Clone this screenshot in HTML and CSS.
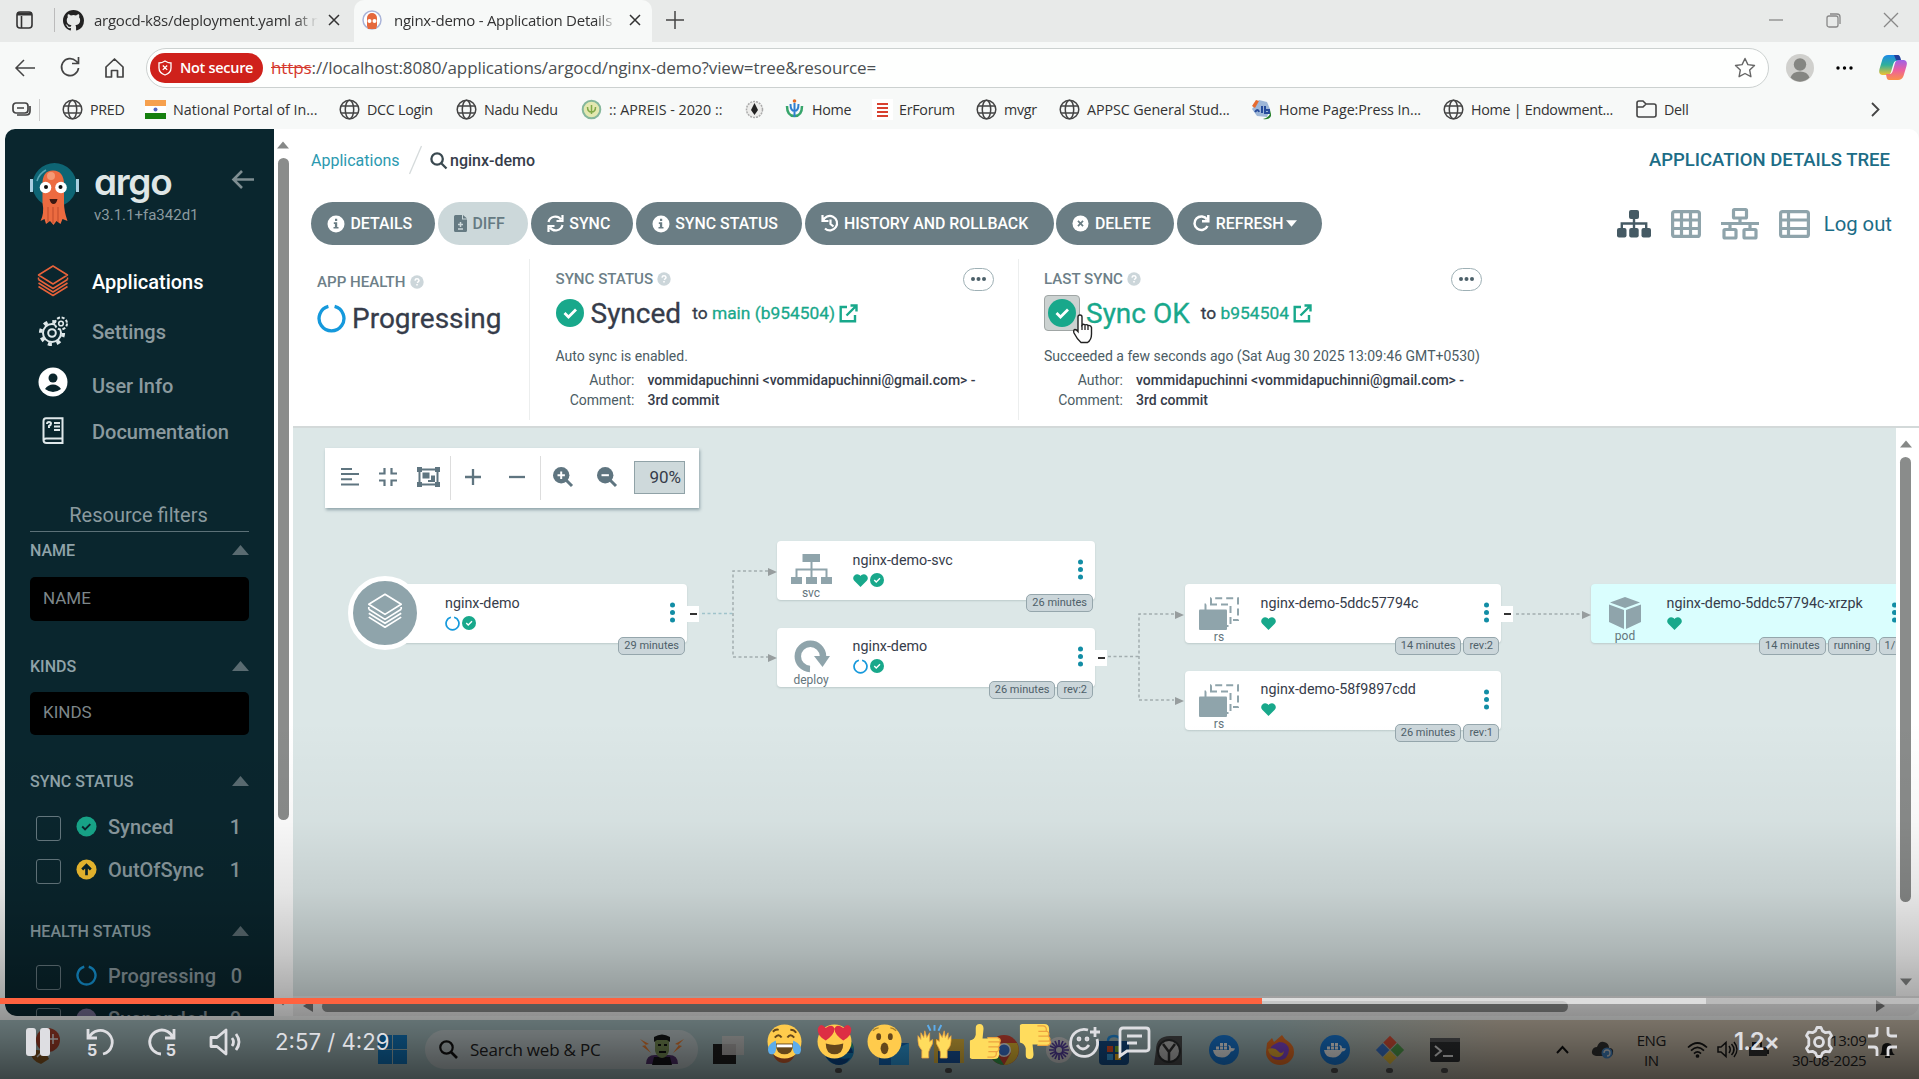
FILE: index.html
```html
<!DOCTYPE html>
<html lang="en">
<head>
<meta charset="utf-8">
<title>nginx-demo - Application Details Tree</title>
<link rel="stylesheet" href="styles.css">
</head>
<body>
<svg class="defs" width="0" height="0">
  <symbol id="globe" viewBox="0 0 21 21"><g fill="none" stroke="#444" stroke-width="1.5"><circle cx="10.5" cy="10.5" r="9.3"/><ellipse cx="10.5" cy="10.5" rx="4.2" ry="9.3"/><path d="M2 7h17M2 14h17"/></g></symbol>
  <symbol id="check" viewBox="0 0 28 28"><circle cx="14" cy="14" r="14" fill="#18a88b"/><path d="M8.5 14l4 4 7.5-7.5" fill="none" stroke="#fff" stroke-width="2.8"/></symbol>
  <symbol id="ring" viewBox="0 0 28 28"><path d="M17 2.3A12 12 0 1 1 11 2.3" fill="none" stroke="#1599dc" stroke-width="3.2"/></symbol>
  <symbol id="heart" viewBox="0 0 16 14"><path d="M8 14L1.3 7.3A4.2 4.2 0 0 1 7 1.2L8 2.2 9 1.2a4.2 4.2 0 0 1 5.7 6.1z" fill="#18a88b"/></symbol>
  <symbol id="info" viewBox="0 0 18 18"><circle cx="9" cy="9" r="8.5" fill="#fff"/><path d="M8 3.800h2.200v2.200H8zM6.800 7.300h3.400v4.700h1.300v1.600H6.500V12h1.400V8.900H6.800z" fill="#6a7d84"/></symbol>
  <symbol id="quest" viewBox="0 0 14 14"><circle cx="7" cy="7" r="6.7" fill="#ccd6da"/><path d="M5 5.6q.2-1.8 2-1.8t2 1.6q0 1-2 2.2M7 9v1.6" fill="none" stroke="#fff" stroke-width="1.5"/></symbol>
  <symbol id="ext" viewBox="0 0 19 19"><path d="M8 3H1.7v14.300h14.300V11M11.500 1.500H17.500V7.500M17 2L7.500 11.500" fill="none" stroke="#18a88b" stroke-width="2.400"/></symbol>
  <symbol id="layers" viewBox="0 0 34 34"><path d="M17 2L31.500 11 17 20 2.500 11zM2.500 15.500L17 24.500 31.500 15.500M2.500 15.500v-2M31.500 15.500v-2M2.500 19L17 28 31.500 19M2.500 22.500L17 31.500 31.500 22.500" fill="none" stroke="currentColor" stroke-width="1.500" stroke-linejoin="round"/></symbol>
  <symbol id="sitemap" viewBox="0 0 34 28"><g fill="currentColor"><rect x="12" y="0" width="10" height="9" rx="2"/><rect x="0" y="18" width="9.500" height="9.500" rx="2"/><rect x="12.200" y="18" width="9.500" height="9.500" rx="2"/><rect x="24.500" y="18" width="9.500" height="9.500" rx="2"/></g><path d="M17 8v11M4.800 19v-5.500h24.400V19" fill="none" stroke="currentColor" stroke-width="2.400"/></symbol>
  <symbol id="rs" viewBox="0 0 40 33"><path d="M12 8V1.200h27V23h-5" fill="none" stroke="#8fa4ab" stroke-width="2" stroke-dasharray="7 4"/><path d="M6.500 14V7.500h25V29H27" fill="none" stroke="#8fa4ab" stroke-width="2" stroke-dasharray="7 4"/><rect y="12.500" width="28" height="20.500" rx="1" fill="#8fa4ab"/></symbol>
  <symbol id="docker" viewBox="0 0 30 30"><circle cx="15" cy="15" r="15" fill="#1a7fe0"/><path d="M4 15h16q1-3-1-5 3 0 3 3l4 .5q-1 3-4 3-3 6-9 6-8 0-9-7.500zM7 11.500h3v3H7zM11 11.500h3v3h-3zM15 11.500h3v3h-3zM11 8h3v3h-3zM15 8h3v3h-3z" fill="#fff"/></symbol>
  <symbol id="tri" viewBox="0 0 17 10"><path d="M8.500 0L17 10H0z" fill="currentColor"/></symbol>
</svg>

<div class="screen">
  <!-- browser tabs -->
  <header class="tabs">
    <svg class="tabs-menu" width="17" height="18" viewBox="0 0 17 18" fill="none" stroke="#333" stroke-width="1.600"><rect x="1" y="1" width="15" height="16" rx="3"/><path d="M1 3h15" stroke-width="3"/><path d="M5.500 5v12"/></svg>
    <i class="tabs-sep"></i>
    <div class="tab tab-first">
      <svg width="21" height="21" viewBox="0 0 16 16"><path fill="#222" d="M8 0C3.580 0 0 3.580 0 8c0 3.540 2.290 6.530 5.470 7.590.4.070.55-.17.55-.38v-1.490C3.730 14.210 3.260 12.780 3.260 12.780c-.36-.92-.89-1.170-.89-1.170-.73-.5.060-.49.060-.49.800.06 1.230.83 1.230.83.720 1.230 1.870.87 2.330.66.070-.52.280-.87.510-1.070-1.780-.2-3.640-.89-3.640-3.950 0-.87.310-1.590.82-2.150-.08-.2-.36-1.020.08-2.120 0 0 .67-.22 2.200.82a7.600 7.600 0 0 1 4 0c1.530-1.040 2.200-.82 2.200-.82.440 1.100.160 1.920.080 2.120.510.560.820 1.280.820 2.150 0 3.070-1.870 3.750-3.650 3.950.290.250.540.730.540 1.480v2.200c0 .21.150.46.550.38A8 8 0 0 0 16 8c0-4.420-3.580-8-8-8z"/></svg>
      <span class="tab-title fade">argocd-k8s/deployment.yaml at n</span>
      <svg class="x" width="12" height="12" viewBox="0 0 12 12"><path d="M1 1l10 10M11 1L1 11" stroke="#333" stroke-width="1.500"/></svg>
    </div>
    <div class="tab tab-active">
      <svg width="20" height="20" viewBox="0 0 20 20"><circle cx="10" cy="10" r="9" fill="#fff" stroke="#aab4d8" stroke-width="1.500"/><path d="M5 16V8a5 5 0 0 1 10 0v8l-1 3H6z" fill="#e5683c"/><circle cx="7.500" cy="11" r="2" fill="#fff"/><circle cx="12.500" cy="11" r="2" fill="#fff"/></svg>
      <span class="tab-title fade">nginx-demo - Application Details</span>
      <svg class="x" width="12" height="12" viewBox="0 0 12 12"><path d="M1 1l10 10M11 1L1 11" stroke="#333" stroke-width="1.500"/></svg>
    </div>
    <svg class="tab-new" width="18" height="18" viewBox="0 0 18 18"><path d="M9 0v18M0 9h18" stroke="#444" stroke-width="1.500"/></svg>
    <div class="win">
      <svg width="14" height="14" viewBox="0 0 14 14"><path d="M0 7h14" stroke="#888" stroke-width="1.300"/></svg>
      <svg width="15" height="15" viewBox="0 0 15 15" fill="none" stroke="#888" stroke-width="1.300"><rect x="1" y="3" width="11" height="11" rx="2"/><path d="M4 1h7q3 0 3 3v7"/></svg>
      <svg width="14" height="14" viewBox="0 0 14 14"><path d="M0 0l14 14M14 0L0 14" stroke="#888" stroke-width="1.300"/></svg>
    </div>
  </header>

  <!-- address bar -->
  <div class="address">
    <svg width="20" height="18" viewBox="0 0 20 18" fill="none" stroke="#444" stroke-width="1.500"><path d="M20 9H1M9 1L1 9l8 8"/></svg>
    <svg width="20" height="21" viewBox="0 0 20 21" fill="none" stroke="#444" stroke-width="1.700"><path d="M18.500 11a8.500 8.500 0 1 1-2.500-7l2 2M18.500 0v6.500H12"/></svg>
    <svg width="19" height="20" viewBox="0 0 19 20" fill="none" stroke="#444" stroke-width="1.700" stroke-linejoin="round"><path d="M1 9l8.500-8L18 9v10h-5.500v-6.500h-6V19H1z"/></svg>
    <div class="urlbar">
      <span class="badge"><svg width="14" height="16" viewBox="0 0 14 16" fill="none" stroke="#fff" stroke-width="1.300"><path d="M7 1q3 2 6 2v5q0 5-6 7-6-2-6-7V3q3 0 6-2zM4.800 5.500l4.400 4.400M9.200 5.500L4.800 9.900"/></svg>Not secure</span>
      <span class="url"><s>https</s>://localhost:8080/applications/argocd/nginx-demo?view=tree&amp;resource=</span>
      <svg class="star" width="22" height="21" viewBox="0 0 22 21"><path d="M11 1.500l2.900 6.100 6.600.9-4.800 4.600 1.200 6.600L11 16.500l-5.900 3.200 1.200-6.600L1.500 8.500l6.600-.9z" fill="none" stroke="#666" stroke-width="1.400" stroke-linejoin="round"/></svg>
    </div>
    <svg width="28" height="28" viewBox="0 0 28 28"><circle cx="14" cy="14" r="14" fill="#d0d0cd"/><circle cx="14" cy="10.500" r="6.200" fill="#858682"/><path d="M4.500 23.500q2-6 9.500-6t9.500 6a13 13 0 0 1-19 0z" fill="#858682"/></svg>
    <svg class="more" width="17" height="4" viewBox="0 0 17 4"><circle cx="2" cy="2" r="1.700"/><circle cx="8.500" cy="2" r="1.700"/><circle cx="15" cy="2" r="1.700"/></svg>
    <svg class="copilot" width="28" height="27" viewBox="0 0 28 27"><defs><linearGradient id="cp1" x2="0" y2="1"><stop stop-color="#1d8ae8"/><stop offset=".5" stop-color="#30b09a"/><stop offset="1" stop-color="#f2c230"/></linearGradient><linearGradient id="cp2" x2="0" y2="1"><stop stop-color="#9d62e8"/><stop offset=".5" stop-color="#ec5fa0"/><stop offset="1" stop-color="#fb9148"/></linearGradient></defs><path d="M9 1h9q2 0 2.500 3l.5 3h-4q-2 0-3 4l-2 7q-1 3-4 3H3q-4-1-2.500-6l3-10Q5 1 9 1z" fill="url(#cp1)"/><path d="M15 1h4q2 0 3 5h-5z" fill="#223f9b"/><path d="M19 26h-9q-2 0-2.500-3L7 20h4q2 0 3-4l2-7q1-3 4-3h5q4 1 2.500 6l-3 10Q23 26 19 26z" fill="url(#cp2)"/></svg>
  </div>

  <!-- bookmarks -->
  <nav class="marks">
    <svg class="marks-menu" width="20" height="15" viewBox="0 0 20 15" fill="none" stroke="#444" stroke-width="1.700"><rect x="1" y="1" width="15" height="10" rx="3"/><path d="M5 6h7M18 4v5q0 4-4 4H5"/></svg>
    <i class="marks-sep"></i>
    <span class="mark" style="width:83px"><svg><use href="#globe"/></svg>PRED</span>
    <span class="mark wide" style="width:194px"><svg viewBox="0 0 21 21"><path fill="#f6a04d" d="M0 1h21v6H0z"/><path fill="#fff" d="M0 7h21v7H0z"/><path fill="#16800f" d="M0 14h21v6H0z"/><circle cx="10.500" cy="10.500" r="2" fill="#5566c0"/></svg>National Portal of In...</span>
    <span class="mark" style="width:117px"><svg><use href="#globe"/></svg>DCC Login</span>
    <span class="mark" style="width:125px"><svg><use href="#globe"/></svg>Nadu Nedu</span>
    <span class="mark wide" style="width:163px"><svg viewBox="0 0 21 21"><circle cx="10.500" cy="10.500" r="8.800" fill="#e3e8b0" stroke="#85b79b" stroke-width="2"/><path d="M10.500 6v9M6.500 8q0 5 4 5t4-5" fill="none" stroke="#81a948" stroke-width="1.500"/></svg>:: APREIS - 2020 ::</span>
    <span class="mark" style="width:40px"><svg viewBox="0 0 21 21"><circle cx="10.500" cy="10.500" r="8" fill="#ececea" stroke="#aaa" stroke-width="1.500" stroke-dasharray="2 1"/><path d="M10.500 4l3.500 7-3.500 5L7 11z" fill="#222"/></svg></span>
    <span class="mark" style="width:88px"><svg viewBox="0 0 21 21"><path d="M3 7q0 10 7.500 10T18 7" fill="none" stroke="#37a56b" stroke-width="2.500"/><path d="M6.500 5q0 7 4 7t4-7M10.500 4v14" fill="none" stroke="#2f7fd0" stroke-width="2"/><circle cx="10.500" cy="2" r="1.800" fill="#e46a28"/></svg>Home</span>
    <span class="mark" style="width:104px"><svg viewBox="0 0 21 21"><path d="M0 0h21v21H0z" fill="#fff"/><path d="M5 5h11M5 9h11M5 13h11M5 17h11" stroke="#d8402f" stroke-width="2"/></svg><b>ErForum</b></span>
    <span class="mark" style="width:83px"><svg><use href="#globe"/></svg>mvgr</span>
    <span class="mark mid" style="width:192px"><svg><use href="#globe"/></svg>APPSC General Stud...</span>
    <span class="mark mid" style="width:192px"><svg viewBox="0 0 21 21"><path d="M1 10L8 1l8 2 3 7-3 8-10-1z" fill="#9eb7d8"/><path d="M1 7l4-6 3 1-4 7z" fill="#e66a2e"/><path d="M12 20q7-1 8-9v6q-2 4-8 3z" fill="#27812b"/><path d="M4 13q3-4 4 0M11 7v7M14 7v7h4v-3h-4" fill="none" stroke="#274c9b" stroke-width="2"/></svg>Home Page:Press In...</span>
    <span class="mark" style="width:193px"><svg><use href="#globe"/></svg>Home | Endowment...</span>
    <span class="mark"><svg viewBox="0 0 21 21" fill="none" stroke="#444" stroke-width="1.600"><path d="M1 4q0-2 2-2h4l3 3h8q2 0 2 2v9q0 2-2 2H3q-2 0-2-2zM1 8h6l3-3"/></svg>Dell</span>
    <svg class="marks-next" width="9" height="15" viewBox="0 0 9 15"><path d="M1 1l6.500 6.500L1 14" fill="none" stroke="#444" stroke-width="1.800"/></svg>
  </nav>

  <div class="page">
    <aside class="side">
      <div class="brand">
        <svg width="49" height="64" viewBox="0 0 49 64"><circle cx="24.500" cy="24" r="22" fill="#0e6574"/><path d="M7 20a18 18 0 0 1 9-11" stroke="#5aa7b5" stroke-width="1.500" fill="none"/><path d="M1.500 18v13M47.500 18v13" stroke="#a9cfe0" stroke-width="3"/><path d="M12.500 24Q12 9.500 23 9.500T34 24v18q0 8 3.500 18l-5-2-2 5-4-3-3 4-3.500-4-4 3-1.500-5-4 2q4-8 2-18z" fill="#ec6b40"/><path d="M18 46v15M23 46v16M28 46v15" stroke="#bf4a2a"/><circle cx="21" cy="15" r="4" fill="#f49a75"/><circle cx="15.500" cy="26.500" r="5.800" fill="#fff"/><circle cx="31" cy="26.500" r="5.800" fill="#fff"/><circle cx="16" cy="26" r="2" fill="#111"/><circle cx="30.500" cy="26" r="2" fill="#111"/><path d="M19.500 38h8q-1 5-4 5t-4-5z" fill="#3b1912"/></svg>
        <div class="brand-text"><span class="brand-name">argo</span><span class="brand-ver">v3.1.1+fa342d1</span></div>
        <svg class="brand-back" width="22" height="19" viewBox="0 0 22 19"><path d="M22 9.500H2M10 1L1.500 9.500 10 18" fill="none" stroke="#7f8e92" stroke-width="2.600"/></svg>
      </div>
      <div class="menu">
        <div class="item on"><svg width="34" height="34"><use href="#layers"/></svg>Applications</div>
        <div class="item i2"><svg width="30" height="30" viewBox="0 0 30 30" fill="none" stroke="#dfe8ea"><circle cx="14" cy="17" r="9" stroke-width="2"/><circle cx="14" cy="17" r="11.300" stroke-width="3.600" stroke-dasharray="4 4.870"/><circle cx="14" cy="17" r="3.800" stroke-width="2"/><circle cx="23" cy="7.500" r="6" fill="#0a252c" stroke-width="2" stroke-dasharray="3 1.700"/><circle cx="23" cy="7.500" r="2.300" stroke-width="1.600"/></svg>Settings</div>
        <div class="item i3"><svg width="30" height="30" viewBox="0 0 30 30"><circle cx="15" cy="15" r="14.500" fill="#fff"/><circle cx="15" cy="11" r="4.500" fill="#0a252c"/><path d="M7 22q3-4.500 8-4.500t8 4.500q-4 3-8 3t-8-3z" fill="#0a252c"/></svg>User Info</div>
        <div class="item i4"><svg width="22" height="28" viewBox="0 0 22 28" fill="none" stroke="#dfe8ea" stroke-width="2"><path d="M20.500 21V1.200H4Q1.500 1.200 1.500 4v19q0 3 3 3h16v-4.500H4q-2.500 0-2.500 2.500"/><path d="M12 6h6M12 9.500h6M12 13h6M5 7q0-2 2-2t2 1.500Q9 8 7 9v2"/></svg>Documentation</div>
      </div>
      <div class="filters-title">Resource filters</div>
      <div class="fh f1">NAME<svg><use href="#tri"/></svg></div>
      <div class="field">NAME</div>
      <div class="fh f2">KINDS<svg><use href="#tri"/></svg></div>
      <div class="field fk">KINDS</div>
      <div class="fh f3">SYNC STATUS<svg><use href="#tri"/></svg></div>
      <div class="opt o1"><i></i><svg viewBox="0 0 22 22"><circle cx="11" cy="11" r="10.500" fill="#18a88b"/><path d="M6.500 11l3 3 5.500-5.500" fill="none" stroke="#0a252c" stroke-width="2"/></svg>Synced<em>1</em></div>
      <div class="opt"><i></i><svg viewBox="0 0 22 22"><circle cx="11" cy="11" r="10.500" fill="#f4c030"/><path d="M11 17V7M6.500 11L11 6.500 15.500 11" fill="none" stroke="#0a252c" stroke-width="2.800"/></svg>OutOfSync<em>1</em></div>
      <div class="fh f4">HEALTH STATUS<svg><use href="#tri"/></svg></div>
      <div class="opt o2"><i></i><svg><use href="#ring"/></svg>Progressing<em>0</em></div>
      <div class="opt"><i></i><svg viewBox="0 0 22 22"><circle cx="11" cy="11" r="10.500" fill="#766f94"/></svg>Suspended<em>0</em></div>
    </aside>
    <div class="vscroll side-scroll"><svg><use href="#tri"/></svg><i></i><svg class="down"><use href="#tri"/></svg></div>

    <main class="main">
      <div class="crumbs">
        <a>Applications</a>
        <svg width="13" height="28" viewBox="0 0 13 28"><path d="M12.500 0L.5 28" stroke="#d5dadb" stroke-width="1.300"/></svg>
        <svg class="mag" width="17" height="17" viewBox="0 0 17 17"><path d="M11.500 11.500l5 5M12.800 7a5.700 5.700 0 1 1-11.400 0 5.700 5.700 0 0 1 11.400 0z" fill="none" stroke="#3a4950" stroke-width="2.300"/></svg>
        <span>nginx-demo</span>
        <b>APPLICATION DETAILS TREE</b>
      </div>
      <div class="actions">
        <button style="width:124px"><svg width="18" height="18"><use href="#info"/></svg>DETAILS</button>
        <button class="off" style="width:90px"><svg width="13" height="17" viewBox="0 0 13 17"><path d="M0 1.500Q0 0 1.500 0H8v4.500h5v11q0 1.500-1.500 1.500h-10Q0 17 0 15.500zM9 0l4 3.500H9z" fill="#657a82"/><path d="M6.500 7v5M4 9.500h5M4 14h5" stroke="#ccd8da" stroke-width="1.500"/></svg>DIFF</button>
        <button style="width:102px"><svg width="17" height="17" viewBox="0 0 17 17" fill="none" stroke="#fff" stroke-width="2.200"><path d="M1.500 7A7 7 0 0 1 14 4.500M15.500 10A7 7 0 0 1 3 12.500M15.500 0v6h-6M1.500 17v-6h6"/></svg>SYNC</button>
        <button style="width:166px"><svg width="18" height="18"><use href="#info"/></svg>SYNC STATUS</button>
        <button style="width:249px"><svg width="18" height="17" viewBox="0 0 18 17" fill="none" stroke="#fff" stroke-width="2.200"><path d="M2 6a7.200 7.200 0 1 1 2 7.500M1.500 0v6h6M9.500 4.500V9l3 2.500"/></svg>HISTORY AND ROLLBACK</button>
        <button style="width:118px"><svg width="17" height="17" viewBox="0 0 18 18"><circle cx="9" cy="9" r="8.500" fill="#fff"/><path d="M6.300 6.300l5.400 5.400M11.700 6.300l-5.400 5.400" stroke="#6a7d84" stroke-width="1.800"/></svg>DELETE</button>
        <button style="width:145px"><svg width="17" height="17" viewBox="0 0 17 17" fill="none" stroke="#fff" stroke-width="2.500"><path d="M14.500 11a6.800 6.800 0 1 1-.5-6.500M15.300 0v6.200H9"/></svg>REFRESH<svg class="caret" width="11" height="7" viewBox="0 0 17 10"><path d="M0 0h17L8.500 10z" fill="#fff"/></svg></button>
        <div class="views">
          <svg class="cur" width="34" height="28"><use href="#sitemap"/></svg>
          <svg width="30" height="28" viewBox="0 0 30 28" fill="none" stroke="#8fa4ab" stroke-width="3.200"><rect x="1.600" y="1.600" width="26.800" height="24.800" rx="2"/><path d="M10.500 1v26M19.500 1v26M1 10h28M1 18.500h28"/></svg>
          <svg width="38" height="32" viewBox="0 0 38 32" fill="none" stroke="#8fa4ab" stroke-width="3.200"><rect x="12.500" y="1.500" width="13" height="8.500" rx="1"/><rect x="3" y="21.500" width="12" height="8.500" rx="1"/><rect x="23" y="21.500" width="12" height="8.500" rx="1"/><path d="M0 15.500h38M19 10v5.500M9 15.500v6M29 15.500v6"/></svg>
          <svg width="31" height="28" viewBox="0 0 31 28" fill="none" stroke="#8fa4ab" stroke-width="3.200"><rect x="1.600" y="1.600" width="27.800" height="24.800" rx="2"/><path d="M9.500 1v26M1 10h28M1 18.500h28"/></svg>
          <a>Log out</a>
        </div>
      </div>

      <section class="status">
        <div class="panel p1">
          <h6>APP HEALTH<svg width="14" height="14"><use href="#quest"/></svg></h6>
          <div class="big"><svg width="29" height="29"><use href="#ring"/></svg>Progressing</div>
        </div>
        <div class="panel p2">
          <h6>SYNC STATUS<svg width="14" height="14"><use href="#quest"/></svg><span class="dots"><svg width="15" height="4" viewBox="0 0 15 4"><circle cx="2" cy="2" r="2"/><circle cx="7.500" cy="2" r="2"/><circle cx="13" cy="2" r="2"/></svg></span></h6>
          <div class="big"><svg width="28" height="28"><use href="#check"/></svg>Synced<small>to <a>main (b954504)</a></small><svg class="ext" width="19" height="19"><use href="#ext"/></svg></div>
          <p>Auto sync is enabled.</p>
          <dl><dt>Author:</dt><dd>vommidapuchinni &lt;vommidapuchinni@gmail.com&gt; -</dd><dt>Comment:</dt><dd>3rd commit</dd></dl>
        </div>
        <div class="panel p3">
          <h6>LAST SYNC<svg width="14" height="14"><use href="#quest"/></svg><span class="dots"><svg width="15" height="4" viewBox="0 0 15 4"><circle cx="2" cy="2" r="2"/><circle cx="7.500" cy="2" r="2"/><circle cx="13" cy="2" r="2"/></svg></span></h6>
          <div class="big green"><span class="focus"><svg width="28" height="28"><use href="#check"/></svg></span>Sync OK<small>to <a>b954504</a></small><svg class="ext" width="19" height="19"><use href="#ext"/></svg>
            <svg class="cursor" width="22" height="30" viewBox="0 0 22 30"><path d="M6 17V3q0-2 2-2t2 2v8q1-1.500 3 0 2-1 3 .5 3-.5 3.500 2V20q0 6-4 8.500H9Q5 25 2 19q-1-3 1-3.500 1.500 0 3 2z" fill="#fff" stroke="#222" stroke-width="1.400"/><path d="M10 11v5M13 11.500v4.500M16 12v4" stroke="#222" stroke-width="1.300"/></svg></div>
          <p>Succeeded a few seconds ago (Sat Aug 30 2025 13:09:46 GMT+0530)</p>
          <dl><dt>Author:</dt><dd>vommidapuchinni &lt;vommidapuchinni@gmail.com&gt; -</dd><dt>Comment:</dt><dd>3rd commit</dd></dl>
        </div>
      </section>

      <div class="graph-row">
        <div class="graph">
          <div class="tools">
            <div class="tg t1">
              <svg width="18" height="18" viewBox="0 0 18 18"><path d="M0 1h11M0 6h18M0 11.300h11M0 16.600h18" stroke="#5f7580" stroke-width="2"/></svg>
              <svg width="18" height="18" viewBox="0 0 18 18"><path d="M0 5.500h5.500V0M12.500 0v5.500H18M0 12.500h5.500V18M12.500 18v-5.500H18" fill="none" stroke="#5f7580" stroke-width="2.200"/></svg>
              <svg width="23" height="20" viewBox="0 0 23 20"><rect x="2.500" y="2.500" width="18" height="15" fill="none" stroke="#5f7580" stroke-width="2"/><path d="M0 0h5v5H0zM18 0h5v5h-5zM0 15h5v5H0zM18 15h5v5h-5zM5.500 5.500h7v6h-7zM14 8.500h4v6.500h-7V13h3z" fill="#5f7580"/></svg>
            </div>
            <div class="tg t2">
              <svg width="16" height="16" viewBox="0 0 16 16"><path d="M8 0v16M0 8h16" stroke="#5f7580" stroke-width="2.300"/></svg>
              <svg width="16" height="16" viewBox="0 0 16 16"><path d="M0 8h16" stroke="#5f7580" stroke-width="2.300"/></svg>
            </div>
            <div class="tg t3">
              <svg width="20" height="20" viewBox="0 0 20 20"><circle cx="8.200" cy="8.200" r="8.200" fill="#5f7580"/><path d="M13 13l6 6" stroke="#5f7580" stroke-width="3"/><path d="M8.200 4.500v7.400M4.500 8.200h7.400" stroke="#fff" stroke-width="2"/></svg>
              <svg width="20" height="20" viewBox="0 0 20 20"><circle cx="8.200" cy="8.200" r="8.200" fill="#5f7580"/><path d="M13 13l6 6" stroke="#5f7580" stroke-width="3"/><path d="M4.500 8.200h7.400" stroke="#fff" stroke-width="2"/></svg>
              <span class="pct">90%</span>
            </div>
          </div>

          <!-- edges, drawn in canvas coordinates -->
          <svg class="edges" width="1603" height="568" viewBox="293 428 1603 568">
            <g fill="none" stroke="#a3aeb0" stroke-width="1.500" stroke-dasharray="3 2.500"><path d="M702 613.500H733" stroke="#9fc3cb"/><path d="M768 571H733V657H768M1108 656.500H1139M1174 614H1139V700H1174M1516 614H1581"/></g>
            <g fill="#979d9e"><path d="M768 568l9 4-9 4zM768 654l9 4-9 4zM1175 611l9 4-9 4zM1175 697l9 4-9 4zM1582 611l9 4-9 4z"/></g>
          </svg>

          <div class="node root" style="left:92px;top:156px;width:302px">
            <span class="disc"><svg width="38" height="38"><use href="#layers"/></svg></span>
            <div class="nt">nginx-demo<span><svg width="15" height="15"><use href="#ring"/></svg><svg width="14" height="14"><use href="#check"/></svg></span></div>
            <i class="kebab"></i><i class="fold"></i><div class="tags"><b>29 minutes</b></div>
          </div>
          <div class="node" style="left:484px;top:113px;width:318px">
            <div class="kind"><svg width="41" height="30" viewBox="0 0 41 30"><path d="M11.500 0h17.500v8H11.500zM0 23h11v7H0zM15 23h11v7H15zM30 23h11v7H30z" fill="#8fa4ab"/><path d="M20.500 8v15M5.500 23v-7.500h30V23" fill="none" stroke="#8fa4ab" stroke-width="2"/></svg>svc</div>
            <div class="nt">nginx-demo-svc<span><svg width="15" height="13"><use href="#heart"/></svg><svg width="14" height="14"><use href="#check"/></svg></span></div>
            <i class="kebab"></i><div class="tags"><b>26 minutes</b></div>
          </div>
          <div class="node" style="left:484px;top:200px;width:318px">
            <div class="kind"><svg width="37" height="31" viewBox="0 0 37 31"><path d="M17 28A12.600 12.600 0 1 1 30 15" fill="none" stroke="#8fa4ab" stroke-width="6.500"/><path d="M21 15h16l-7.500 11z" fill="#8fa4ab"/></svg>deploy</div>
            <div class="nt up">nginx-demo<span><svg width="15" height="15"><use href="#ring"/></svg><svg width="14" height="14"><use href="#check"/></svg></span></div>
            <i class="kebab"></i><i class="fold"></i><div class="tags"><b>26 minutes</b><b>rev:2</b></div>
          </div>
          <div class="node" style="left:892px;top:156px;width:316px">
            <div class="kind"><svg width="40" height="33"><use href="#rs"/></svg>rs</div>
            <div class="nt">nginx-demo-5ddc57794c<span><svg width="15" height="13"><use href="#heart"/></svg></span></div>
            <i class="kebab"></i><i class="fold"></i><div class="tags"><b>14 minutes</b><b>rev:2</b></div>
          </div>
          <div class="node" style="left:892px;top:243px;width:316px">
            <div class="kind"><svg width="40" height="33"><use href="#rs"/></svg>rs</div>
            <div class="nt up">nginx-demo-58f9897cdd<span><svg width="15" height="13"><use href="#heart"/></svg></span></div>
            <i class="kebab"></i><div class="tags"><b>26 minutes</b><b>rev:1</b></div>
          </div>
          <div class="node pod" style="left:1298px;top:156px;width:318px">
            <div class="kind"><svg width="32" height="32" viewBox="0 0 32 32"><path d="M16 0l15 5.500L16 11 1 5.500zM0 7.500L15 13v19L0 25zM32 7.500L17 13v19l15-7z" fill="#8fa4ab"/></svg>pod</div>
            <div class="nt">nginx-demo-5ddc57794c-xrzpk<span><svg width="15" height="13"><use href="#heart"/></svg></span></div>
            <i class="kebab"></i><div class="tags"><b>14 minutes</b><b>running</b><b>1/1</b></div>
          </div>
        </div>
        <div class="vscroll graph-scroll"><svg><use href="#tri"/></svg><i></i><svg class="down"><use href="#tri"/></svg></div>
      </div>
      <div class="hscroll"><svg class="l" width="10" height="12" viewBox="0 0 10 12"><path d="M10 0v12L0 6z"/></svg><i></i><svg class="r" width="9" height="12" viewBox="0 0 9 12"><path d="M0 0v12l9-6z"/></svg></div>
    </main>
  </div>

  <footer class="task">
    <svg class="widget" width="32" height="38" viewBox="0 0 32 38"><circle cx="19" cy="13" r="12" fill="#a8402a"/><path d="M0 22l16 2 4 8-8 5q-10-3-12-15z" fill="#8d5a22"/><path d="M24 7v10M19 12h10M8 30l8-8" stroke="#eee" stroke-width="1.500"/></svg>
    <svg class="start" width="29" height="29" viewBox="0 0 29 29"><path d="M0 0h14v14H0zM15 0h14v14H15zM0 15h14v14H0zM15 15h14v14H15z" fill="#127bc4"/></svg>
    <div class="search"><svg width="19" height="19" viewBox="0 0 19 19"><circle cx="7.500" cy="7.500" r="6.200" fill="none" stroke="#111" stroke-width="2.200"/><path d="M12 12l6 6" stroke="#111" stroke-width="2.600"/></svg>Search web &amp; PC
      <svg class="frank" width="46" height="31" viewBox="0 0 46 31"><path d="M7 30q0-9 9-9h14q9 0 9 9z" fill="#54336f"/><path d="M13 31l2-8h16l2 8z" fill="#151218"/><path d="M16 4q7-4 14 0v13q-2 7-7 7t-7-7z" fill="#7d9459"/><path d="M15 8V3q8-5 16 0v5l-3-2H18z" fill="#151718"/><path d="M19 11h3M25 11h3M20 18h7" stroke="#111" stroke-width="2"/><path d="M1 5l9 5-4 1 6 8-9-7 4-1zM45 5l-9 5 4 1-6 8 9-7-4-1z" fill="#f08032"/></svg></div>
    <div class="apps">
      <span><svg width="31" height="28" viewBox="0 0 31 28"><path d="M0 8h23v20H0z" fill="#202020"/><path d="M9 0h22v19H9z" fill="#d5d1d0" opacity=".85"/></svg></span>
      <span><svg width="30" height="30" viewBox="0 0 30 30"><circle cx="15" cy="17" r="11" fill="#d76430"/></svg></span>
      <span class="run"><svg width="30" height="30" viewBox="0 0 30 30"><circle cx="15" cy="15" r="15" fill="#168ac9"/><path d="M2 22q0-13 13-13t14 9H13q2 8 13 5-4 7-11 7T2 22z" fill="#0b4c95"/><path d="M14 0q14 0 15 14-5-8-15-8z" fill="#48c778"/></svg></span>
      <span><svg width="30" height="30" viewBox="0 0 30 30"><path d="M0 8h30v22H0z" fill="#146fc5"/><path d="M12 16l18-8v22H12z" fill="#30a5ea"/></svg></span>
      <span class="run"><svg width="30" height="30" viewBox="0 0 30 30"><path d="M0 4h30v24H0z" fill="#f0c343"/><path d="M4 16h22v12H4z" fill="#1a5bab"/></svg></span>
      <span><svg width="30" height="30" viewBox="0 0 30 30"><circle cx="15" cy="15" r="15" fill="#df4937"/><path d="M2 8l8 14 5 8A15 15 0 0 1 2 8z" fill="#39a852"/><path d="M15 8h13A15 15 0 0 1 15 30l7-12z" fill="#f3c637"/><circle cx="15" cy="15" r="7" fill="#fff"/><circle cx="15" cy="15" r="5.500" fill="#427fe0"/></svg></span>
      <span><svg width="26" height="26" viewBox="0 0 26 26"><circle cx="13" cy="13" r="13" fill="#ddd"/><path d="M13 3v20M3 13h20M6 6l14 14M20 6L6 20M9 4l8 18M17 4L9 22M4 9l18 8M4 17l18-8" stroke="#5940a8" stroke-width="1.700"/><circle cx="13" cy="13" r="3" fill="#ddd"/></svg></span>
      <span><svg width="30" height="30" viewBox="0 0 30 30"><path d="M9 6q0-5 6-5t6 5" fill="none" stroke="#2494e8" stroke-width="2.500"/><path d="M0 6h30v20q0 4-4 4H4q-4 0-4-4z" fill="#15508e"/><path d="M8 11h6v6H8z" fill="#f05326"/><path d="M16 11h6v6h-6z" fill="#7ebb2d"/><path d="M8 19h6v6H8z" fill="#38a6ea"/><path d="M16 19h6v6h-6z" fill="#f9b61c"/></svg></span>
      <span><svg width="30" height="30" viewBox="0 0 30 30"><path d="M2 15q0-14 14-14h12v29H0z" fill="#4e4f50"/><circle cx="15" cy="16" r="11" fill="#c9c9c8" stroke="#303233" stroke-width="2"/><path d="M15 26v-9M15 17L9 9M15 17l6-8" stroke="#333" stroke-width="2.500"/></svg></span>
      <span><svg width="30" height="30"><use href="#docker"/></svg></span>
      <span><svg width="29" height="30" viewBox="0 0 29 30"><path d="M2 8L7 3l2 4 8-7q2 4 7 7 5 4 5 10a14 13 0 0 1-28 0z" fill="#f47628"/><path d="M14 7q9 0 10 8-1 10-10 10T5 16q0-5 5-7z" fill="#8b4bdc"/><path d="M3 14q7-2 10 2t6 0q-1 7-8 6T3 14z" fill="#f6b534"/></svg></span>
      <span class="run"><svg width="30" height="30"><use href="#docker"/></svg></span>
      <span class="run"><svg width="30" height="30" viewBox="0 0 30 30"><g transform="rotate(45 15 15)"><path d="M5 5h9.500v9.500H5z" fill="#e3543b"/><path d="M15.500 5H25v9.500h-9.500z" fill="#56a650"/><path d="M5 15.500h9.500V25H5z" fill="#3c79d2"/><path d="M15.500 15.500H25V25h-9.500z" fill="#eac13c"/></g></svg></span>
      <span class="run"><svg width="30" height="24" viewBox="0 0 30 24"><rect width="30" height="24" rx="2" fill="#303234"/><path d="M0 0h30v4H0z" fill="#5b5c5e"/><path d="M5 8l6 5-6 5M13 18h10" fill="none" stroke="#eee" stroke-width="2"/></svg></span>
    </div>
    <div class="tray">
      <svg width="13" height="9" viewBox="0 0 13 9"><path d="M1 8l5.500-6L12 8" fill="none" stroke="#111" stroke-width="2"/></svg>
      <svg width="23" height="19" viewBox="0 0 23 19"><path d="M5 16q-5-1-4-5t5-4q2-6 7-5t5 6q5 0 4 5t-5 3z" fill="#333"/><circle cx="16" cy="13" r="5.500" fill="#4688c8"/><path d="M13 13a3 3 0 1 1 3 3" fill="none" stroke="#ddd" stroke-width="1.300"/></svg>
      <span class="lang">ENG<br>IN</span>
      <svg class="wifi" width="21" height="16" viewBox="0 0 21 16" fill="none" stroke="#161616" stroke-width="1.700"><path d="M1 5.500q9.500-9 19 0M4 8.700q6.500-6.500 13 0M7 11.700q3.500-3.500 7 0"/><circle cx="10.500" cy="14" r="1"/></svg>
      <svg width="21" height="17" viewBox="0 0 21 17" fill="none" stroke="#161616" stroke-width="1.500"><path d="M1 6h3l5-4.500v14L4 11H1zM12 5q2.500 3.500 0 7M14.500 3q5 5.500 0 11M17 1q6 7.500 0 15"/></svg>
      <svg class="bat" width="22" height="15" viewBox="0 0 22 15"><path d="M1 5h18v9H1z" fill="#333"/><path d="M5 5V1h8v4M20 8v4" fill="none" stroke="#222" stroke-width="2"/></svg>
      <span class="clock">13:09<br>30-08-2025</span>
      <svg width="17" height="18" viewBox="0 0 17 18"><path d="M1 14q2-2 2-7t6-5q5 1 4 6 0 4 3 6z" fill="#181818"/><path d="M6 16h5" stroke="#181818" stroke-width="2"/></svg>
    </div>
  </footer>

  <!-- video player controls -->
  <div class="player">
    <div class="bar"><i class="loaded" style="width:1706px"></i><i class="played" style="width:1262px"></i></div>
    <div class="controls">
      <svg class="c-pause" width="24" height="28" viewBox="0 0 24 28"><rect width="10" height="28" rx="3"/><rect x="14" width="10" height="28" rx="3"/></svg>
      <div class="skip"><svg width="28" height="28" viewBox="0 0 28 28"><path d="M3 10A12 12 0 1 1 17 26M2 1v9h9" /></svg><b>5</b></div>
      <div class="skip fwd"><svg width="28" height="28" viewBox="0 0 28 28"><path d="M25 10A12 12 0 1 0 13 26M26 1v9h-9" /></svg><b>5</b></div>
      <svg class="c-vol" width="33" height="28" viewBox="0 0 33 28"><path d="M2 9.500h6L17 2v24l-9-7.500H2zM23 10q3 4 0 8M27 6q6 8 0 16"/></svg>
      <span class="time">2:57 / 4:29</span>
      <div class="emojis">
        <svg viewBox="0 0 36 36"><circle cx="18" cy="18" r="17.500" fill="#ffcb4c"/><path d="M9 20h18q0 11-9 11t-9-11z" fill="#65471b"/><path d="M10 21h16v3H10z" fill="#fff"/><path d="M8 14q4-5 7 0M21 14q3-5 7 0M6 8q3-3 6-2M24 6q4 0 6 3" fill="none" stroke="#65471b" stroke-width="2"/><path d="M9 17q-8 4-8 9 0 6 5 5t3-14zM27 17q8 4 8 9 0 6-5 5t-3-14z" fill="#5dadec"/></svg>
        <svg viewBox="0 0 36 36"><circle cx="18" cy="18" r="17.500" fill="#ffcb4c"/><path d="M9 20q9 3 18 0 0 11-9 11T9 20z" fill="#65471b"/><path d="M9 17Q-1 11 1 4q3-6 8 0 7-5 9 1 0 6-9 12zM27 17q10-6 8-13-3-6-8 0-7-5-9 1 0 6 9 12z" fill="#dd2e44"/></svg>
        <svg viewBox="0 0 36 36"><circle cx="18" cy="18" r="17.500" fill="#ffcb4c"/><ellipse cx="18" cy="25" rx="4" ry="6" fill="#65471b"/><ellipse cx="12" cy="13" rx="2.500" ry="3.500" fill="#65471b"/><ellipse cx="24" cy="13" rx="2.500" ry="3.500" fill="#65471b"/><path d="M6 7q3-3 6-3M24 4q3 0 6 3" fill="none" stroke="#a9822a" stroke-width="1.500"/></svg>
        <svg viewBox="0 0 36 36"><path d="M18 1v6M11 1l3 6M25 1l-3 6" stroke="#5dadec" stroke-width="2"/><path d="M5 35V27Q1 23 1 17v-5l3 4V9l3 5 1-7 2 7 3-5v9l3-2q1 4-2 8t-2 11zM31 35v-8q4-4 4-10v-5l-3 4V9l-3 5-1-7-2 7-3-5v9l-3-2q-1 4 2 8t2 11z" fill="#ffdc5d" stroke="#eda33f" stroke-width=".8"/></svg>
        <svg viewBox="0 0 36 36"><g id="thumb"><path d="M3 17q5-1 6-6V4q0-4 4-4t4 5l-1 10h13q4 0 4 4v12q0 5-5 5H5l-2-1z" fill="#ffdc5d"/><path d="M21 14h10q4 1 3 4.500H22M22 18.500h11q2 3-1 5H22M22 23.500h10q2 3-1 5h-9M22 28.500h8q1 5-3 5.500h-6" fill="#ffdc5d" stroke="#eda33f" stroke-width="1.300"/></g></svg>
        <svg viewBox="0 0 36 36"><use href="#thumb" transform="matrix(1 0 0 -1 0 36)"/></svg>
      </div>
      <svg class="line c-smile" width="33" height="32" viewBox="0 0 33 32"><path d="M20 4A13.500 13.500 0 1 0 29 13M27 1v10M22 6h10M9 19q6 8 12 0"/><circle cx="11" cy="13" r="1"/><circle cx="19" cy="13" r="1"/></svg>
      <svg class="line c-note" width="33" height="32" viewBox="0 0 33 32"><path d="M2 30V5q0-3 3-3h23q3 0 3 3v17q0 3-3 3H9zM9 10h15M9 17h10"/></svg>
      <span class="speed">1.2×</span>
      <svg class="line c-gear" width="32" height="32" viewBox="0 0 32 32"><path d="M12.500 5L14 1.500h4L19.500 5l3 1.700 4-.6 2 3.500-2.300 3.200v6.400l2.300 3.200-2 3.500-4-.6-3 1.700L18 30.500h-4L12.500 27l-3-1.700-4 .6-2-3.500 2.300-3.200v-6.400L3.500 9.600l2-3.500 4 .6z" stroke-linejoin="round"/><circle cx="16" cy="16" r="4.500"/></svg>
      <svg class="line c-exit" width="29" height="29" viewBox="0 0 29 29"><path d="M0 9h6q3 0 3-3V0M20 0v6q0 3 3 3h6M0 20h6q3 0 3 3v6M20 29v-6q0-3 3-3h6"/></svg>
    </div>
  </div>
</div>
</body>
</html>
```
FILE: styles.css
```css
* { box-sizing: border-box; }
body { margin: 0; overflow: hidden; }
svg { flex: none; display: block; overflow: visible; }
i, em { font-style: normal; }
.defs { position: absolute; }
.screen { position: relative; width: 1919px; height: 1079px; overflow: hidden; background: #f7f9f8; display: flex; flex-direction: column; font-family: Roboto, "Liberation Sans", sans-serif; color: #363c4a; white-space: nowrap; }

/* tabs */
.tabs { height: 42px; background: #e8eae9; display: flex; align-items: center; font: 15px "Open Sans", sans-serif; color: #333; padding-bottom: 2px; flex: none; }
.tabs-menu { margin-left: 16px; }
.tabs-sep { width: 1px; height: 24px; background: #bbb; margin-left: 21px; }
.tab { display: flex; align-items: center; }
.tab-first { width: 299px; padding-left: 8px; gap: 10px; }
.tab-active { width: 298px; height: 42px; background: #f7f9f8; border-radius: 10px 10px 0 0; padding: 0 0 2px 8px; gap: 12px; margin-top: 2px; }
.tab-title { overflow: hidden; width: 224px; letter-spacing: -.25px; }
.fade { -webkit-mask-image: linear-gradient(90deg, #000 90%, transparent); }
.tab-active .x { margin-left: -1px; }
.tab-new { margin-left: 14px; }
.win { display: flex; gap: 43px; align-items: center; margin-left: auto; margin-right: 21px; }

/* address bar */
.address { height: 51px; display: flex; align-items: center; padding-left: 15px; flex: none; gap: 25px; }
.urlbar { width: 1623px; height: 40px; border: 1px solid #ccd1d0; border-radius: 20px; background: #fefffe; display: flex; align-items: center; padding-left: 3px; margin-left: -3px; }
.badge { width: 113px; height: 30px; border-radius: 15px; background: #cf211b; color: #fff; font: 600 14.500px "Open Sans", sans-serif; letter-spacing: -.3px; display: flex; align-items: center; gap: 8px; padding-left: 8px; }
.url { font: 17px "Open Sans", sans-serif; letter-spacing: -.1px; color: #4b4f52; margin-left: 8px; }
.url s { color: #d5392d; }
.star { margin-left: auto; margin-right: 12px; }
.address > svg:nth-last-child(3) { margin-left: -8px; }
.more { margin-left: -3px; }
.copilot { margin-left: 1px; }

/* bookmarks */
.marks { height: 36px; display: flex; align-items: center; flex: none; padding-bottom: 3px; font: 14.300px "Open Sans", sans-serif; color: #333; }
.marks-menu { margin-left: 12px; }
.marks-sep { width: 1px; height: 22px; background: #ccc; margin: 0 22px 0 7px; }
.mark { display: flex; align-items: center; gap: 7px; letter-spacing: -.28px; flex: none; }
.wide { letter-spacing: 0; }
.mid { letter-spacing: -.1px; }
.mark svg { width: 21px; height: 21px; }
.mark b { font-weight: 400; margin-left: -1px; }
.marks-next { margin-left: auto; margin-right: 39px; }

/* page */
.page { height: 887px; width: 1914px; margin-left: 5px; display: flex; flex: none; background: #fff; border-radius: 10px 10px 12px 12px; overflow: hidden; }
.side { width: 269px; height: 887px; background: #0a262e; color: #8b9a9f; padding: 0 25px; overflow: hidden; flex: none; border-bottom-left-radius: 10px; }
.brand { display: flex; height: 97px; padding-top: 32px; position: relative; }
.brand-text { margin-left: 15px; display: flex; flex-direction: column; }
.brand-name { font: 600 37px/42px Inter, sans-serif; font-feature-settings: "cv11"; letter-spacing: -1.300px; color: #dfe6e6; height: 45px; }
.brand-ver { font-size: 15px; line-height: 19px; }
.brand-back { margin: 9px 0 0 auto; margin-right: -5px; }
.menu { padding-top: 37px; font-weight: 500; font-size: 20px; }
.item { display: grid; grid-template-columns: 62px auto; align-items: center; height: 38px; }
.item svg { justify-self: start; }
.on { color: #fff; }
.on svg { color: #e8623a; margin: -3px 0 0 6px; }
.i2 { height: 38px; margin-top: 12px; }
.i2 svg { margin: -3px 0 0 8px; }
.i3 { margin-top: 16px; }
.i3 svg { margin: -8px 0 0 8px; }
.i4 { margin-top: 8px; }
.i4 svg { margin: -3px 0 0 12px; }
.filters-title { margin-top: 45px; height: 36px; line-height: 38px; text-align: center; font-size: 20px; border-bottom: 1px solid #5c7178; padding-right: 2px; }
.fh { display: flex; align-items: center; justify-content: space-between; height: 20px; font-weight: 500; font-size: 16px; color: #90a3a9; }
.fh svg { width: 17px; height: 10px; color: #5a6b71; }
.f1 { margin-top: 8px; }
.field { margin-top: 17px; height: 44px; background: #000; border-radius: 5px; font-size: 17px; line-height: 42px; padding-left: 13px; color: #7d878a; }
.f2 { margin-top: 35px; }
.fk { margin-top: 16px; height: 43px; line-height: 41px; }
.f3 { margin-top: 36px; }
.opt { display: flex; align-items: center; height: 43px; font-size: 20px; font-weight: 500; padding-left: 6px; }
.opt i { width: 25px; height: 25px; border: 1.500px solid #667980; border-radius: 3px; margin-right: 15px; margin-top: 3px; }
.opt svg { width: 21px; height: 21px; margin-right: 11px; }
.opt em { margin-left: auto; margin-right: 8px; }
.o1 { margin-top: 14px; }
.f4 { margin-top: 30px; }
.o2 { margin-top: 13px; }
.o2 em { margin-right: 7px; }

.vscroll { display: flex; flex-direction: column; align-items: center; flex: none; color: #868887; }
.vscroll svg { width: 12px; height: 10px; }
.vscroll .down { transform: scaleY(-1); margin-top: auto; }
.vscroll i { width: 11px; background: #8a8c8b; border-radius: 6px; }
.side-scroll { width: 19px; padding: 11px 1px 9px 0; }
.side-scroll i { height: 662px; margin-top: 8px; }

/* main */
.main { flex: 1; display: flex; flex-direction: column; min-width: 0; }
.crumbs { height: 64px; display: flex; align-items: center; padding: 0 29px 2px 18px; font-size: 16px; flex: none; }
.crumbs a { color: #2b99b0; width: 98px; }
.mag { margin: 0 3px 0 8px; }
.crumbs span { font-weight: 500; }
.crumbs b { margin-left: auto; font-weight: 500; font-size: 18.500px; color: #1c6d87; margin-top: -1px; }
.actions { height: 61px; display: flex; align-items: center; padding: 0 27px 0 18px; gap: 2.900px; flex: none; }
.actions button { height: 43px; border: 0; border-radius: 22px; background: #6a7d84; color: #fff; font: 500 15.900px Roboto, sans-serif; padding: 0 0 0 16px; display: flex; align-items: center; gap: 5.500px; flex: none; }
.actions .off { background: #ccd8da; color: #657a82; }
.caret { margin-left: -3px; }
.views { margin-left: auto; display: flex; align-items: center; gap: 20px; color: #455a64; }
.views a { font-size: 20.300px; color: #1c6d87; margin-left: -6px; }

.status { height: 174px; display: flex; flex: none; padding-top: 5px; border-bottom: 2px solid #d3d9d9; }
.panel { height: 161px; position: relative; padding-top: 10px; }
.p1 { width: 236.500px; padding: 13px 0 0 24px; border-right: 1px solid #eceeee; }
.p2 { width: 489px; padding-left: 26px; border-right: 1px solid #eceeee; }
.p3 { padding-left: 25.500px; width: 463px; }
h6 { margin: 0; font-weight: 500; font-size: 15.100px; line-height: 20px; color: #6d7f88; display: flex; align-items: center; gap: 4px; height: 20px; }
.dots { width: 31px; height: 23px; border: 1px solid #9eb0b5; border-radius: 12px; display: flex; align-items: center; justify-content: center; fill: #4c6069; margin-left: auto; margin-right: 24px; }
.p3 .dots { margin-right: 0; }
.big { font-size: 28px; display: flex; align-items: center; height: 36px; margin-top: 6px; position: relative; font-weight: 400; -webkit-text-stroke: .3px; }
.p1 .big { margin-top: 8px; }
.big > svg:first-child { margin-right: 6px; }
.p2 .big > svg:first-child { margin-right: 7px; }
.big small { font-size: 17.400px; margin: 0 4px 0 11px; }
.big a, .green { color: #18a88b; }
.green small { color: #363c4a; }
.focus { width: 36px; height: 36px; border: 1px solid #a0a6a5; border-radius: 4px; background: #ccd2d1; padding: 3px; margin-right: 6px; }
.cursor { position: absolute; left: 28px; top: 19px; }
p { margin: 16px 0 0; font-size: 14.030px; line-height: 18px; color: #4b5c64; }
dl { display: grid; grid-template-columns: 79px auto; column-gap: 13px; margin: 5px 0 0; font-size: 14px; line-height: 20px; }
dt { text-align: right; color: #4b5c64; }
dd { margin: 0; font-weight: 500; font-size: 14px; }

.graph-row { display: flex; height: 568px; flex: none; }
.graph { width: 1603px; height: 568px; background: #dce7e7; position: relative; overflow: hidden; flex: none; }
.tools { position: absolute; left: 32px; top: 20px; width: 374px; height: 60px; background: #fff; box-shadow: 1px 2px 3px #90a4aa; display: flex; align-items: center; }
.tg { display: flex; align-items: center; height: 44px; padding-bottom: 3px; }
.t1 { gap: 20px; padding-left: 15.500px; width: 126px; border-right: 1px solid #ddd; }
.t2 { gap: 28px; padding-left: 14px; width: 90px; border-right: 1px solid #ddd; }
.t3 { gap: 24px; padding-left: 12px; }
.pct { width: 51px; height: 33px; border: 1px solid #90a2a7; background: #ced9db; font-size: 17px; line-height: 30px; text-align: right; padding-right: 3px; margin-left: -7px; margin-top: 1px; }
.edges { position: absolute; left: 0; top: 0; }
.node { position: absolute; height: 59px; background: #fff; border-radius: 4px; box-shadow: 0 1px 2px #bccaca; }
.pod { background: #dafefe; }
.kind { position: absolute; left: 9px; top: 13px; width: 50px; height: 46px; display: flex; flex-direction: column; align-items: center; justify-content: space-between; font-size: 12px; line-height: 14px; color: #64757c; }
.nt { position: absolute; left: 75.500px; top: 10px; font-size: 14.300px; line-height: 18px; color: #363c4a; }
.up { top: 9px; }
.root .nt { left: 60px; }
.nt span { display: flex; gap: 2px; align-items: center; height: 15px; margin-top: 3.500px; }
.kebab { position: absolute; right: 12.500px; top: 26px; width: 5px; height: 5px; border-radius: 50%; background: #128da5; box-shadow: 0 -7.500px #128da5, 0 7.500px #128da5; }
.fold { position: absolute; right: -12px; top: 22px; width: 12px; height: 16px; background: #fff; display: flex; align-items: center; justify-content: center; }
.fold::after { content: ""; width: 7px; height: 1.500px; background: #333; }
.tags { position: absolute; right: 2px; top: 53px; display: flex; gap: 2px; }
.tags b { height: 18px; border: 1px solid #95a6ac; background: #cbd6da; border-radius: 5px; font-weight: 400; font-size: 11px; line-height: 16px; padding: 0 5px; color: #4e6069; }
.pod .tags { right: auto; left: 168px; }
.disc { position: absolute; left: -37px; top: -8px; width: 74px; height: 74px; border: 5px solid #fff; border-radius: 50%; background: #8fa4ab; color: #fff; display: flex; align-items: center; justify-content: center; }
.disc svg { margin-top: -4px; }
.graph-scroll { padding: 11px 0 9px 3.500px; flex: 1; align-items: flex-start; }
.graph-scroll i { height: 445px; margin-top: 8px; }
.hscroll { height: 20px; display: flex; align-items: center; background: #eee; padding: 0 34px 0 10px; flex: none; fill: #777; }
.hscroll i { width: 1246px; height: 11px; border-radius: 6px; background: #8a8c8b; margin-left: 9px; }
.hscroll .r { margin-left: auto; }

/* taskbar */
.task { margin-top: 4px; height: 59px; background: linear-gradient(90deg, #a7c0c2 0, #a7c0c2 1270px, #cbbfad 1500px); display: flex; align-items: center; flex: none; font-family: "Open Sans", sans-serif; color: #222; }
.widget { margin: -8px 0 0 29px; }
.start { margin-left: 317px; }
.search { width: 273px; height: 39px; border-radius: 20px; background: #c4cfd1; margin-left: 18px; padding-left: 14px; display: flex; align-items: center; font-size: 17px; gap: 12px; letter-spacing: -.2px; }
.frank { margin-left: auto; margin-right: 13px; }
.apps { display: flex; margin-left: 3px; }
.apps span { width: 55.100px; height: 59px; display: flex; align-items: center; justify-content: center; position: relative; }
.run::after { content: ""; position: absolute; bottom: 6px; left: 24px; width: 7px; height: 5px; border-radius: 3px; background: #555; }
.tray { display: flex; align-items: center; margin-left: 84px; font-size: 15px; line-height: 20px; flex: 1; }
.tray svg:nth-child(2) { margin-left: 22px; }
.lang { text-align: center; margin-left: 22px; width: 30px; letter-spacing: -.5px; }
.wifi { margin-left: 21px; }
.wifi + svg { margin-left: 9px; }
.bat { margin-left: 10px; }
.clock { text-align: right; margin-left: 18px; margin-right: 13px; width: 78px; letter-spacing: -.4px; }

/* player */
.player { position: absolute; left: 0; right: 0; bottom: 0; height: 359px; padding-top: 278px; background: linear-gradient(180deg, rgba(0,0,0,0) 0, rgba(0,0,0,.03) 28%, rgba(0,0,0,.1) 48%, rgba(0,0,0,.22) 65%, rgba(0,0,0,.35) 79%, rgba(0,0,0,.46) 88%, rgba(0,0,0,.64) 100%); }
.bar { height: 6px; background: rgba(255,255,255,.3); display: grid; }
.bar i { grid-area: 1 / 1; height: 6px; }
.loaded { background: rgba(255,255,255,.5); }
.played { background: #ff623f; }
.controls { height: 75px; display: flex; align-items: center; fill: #dedee2; color: #dedee2; }
.c-pause { margin-left: 26px; }
.skip { margin-left: 36px; position: relative; width: 28px; height: 28px; }
.fwd { margin-left: 34px; }
.skip svg, .c-vol, .line { fill: none; stroke: #dedee2; stroke-width: 2.800; }
.skip b { position: absolute; left: 1px; bottom: -3px; font: 700 16px/17px Inter, sans-serif; }
.fwd b { left: auto; right: 0; }
.c-vol { margin-left: 33px; stroke-linejoin: round; }
.time { font: 400 22.200px Inter, sans-serif; margin-left: 33px; width: 116px; }
.emojis { display: flex; gap: 15px; margin-left: 376px; }
.emojis svg { width: 35px; height: 35px; }
.c-smile { margin-left: 16px; }
.c-note { margin-left: 17px; }
.speed { font: 600 24px Inter, sans-serif; letter-spacing: -1px; width: 50px; margin-left: auto; }
.c-gear { margin-left: 19px; }
.c-exit { margin-left: 33px; margin-right: 22px; }
```
